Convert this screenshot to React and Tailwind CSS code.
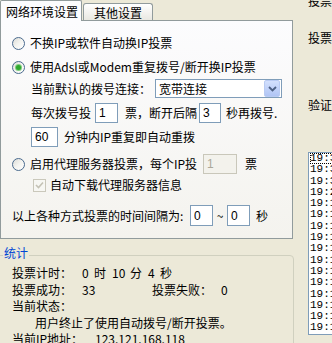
import React from 'react';

const cjk = "font-['Noto_Sans_CJK_SC','Noto_Sans',sans-serif]";

function Radio({ checked }) {
  return (
    <span className="flex h-[13px] w-[13px] shrink-0 items-center justify-center rounded-full border border-[#4a6a8e] bg-gradient-to-br from-[#dcdcd7] via-[#f4f4f0] to-white">
      {checked && <span className="h-[5px] w-[5px] rounded-full bg-[#2fa82f] shadow-[0_0_0_1px_#7fcd7f]" />}
    </span>
  );
}

function Field({ value, className, disabled }) {
  return (
    <input
      readOnly
      value={value}
      disabled={disabled}
      className={
        'shrink-0 px-[3px] text-[12px] outline-none font-["Liberation_Sans",sans-serif] ' +
        (disabled
          ? 'border border-[#c9c7ba] bg-[#f3f2ec] text-[#aca899] '
          : 'border border-[#7f9db9] bg-white text-black ') +
        className
      }
    />
  );
}

const logs = [
  '19:34:52 投票成功',
  '19:33:47 投票成功',
  '19:31:05 投票成功',
  '19:28:40 投票成功',
  '19:19:22 投票成功',
  '19:18:56 投票成功',
  '19:18:31 投票成功',
  '19:17:58 投票成功',
  '19:17:26 投票成功',
  '19:16:59 投票成功',
  '19:16:33 投票成功',
  '19:16:02 投票成功',
  '19:15:37 投票成功',
  '19:15:10 投票成功',
  '19:14:44 投票成功',
  '19:14:18 投票成功',
];

export default function App() {
  return (
    <div className={`flex h-[343px] w-[332px] overflow-hidden bg-[#ece9d8] text-[12px] leading-[14px] text-black ${cjk}`}>
      {/* left side: tabs + stats */}
      <div className="flex w-[294px] shrink-0 flex-col">
        <div className="flex h-[20px] shrink-0 items-end">
          <div className="relative z-10 -mb-px flex h-[21px] w-[82px] items-center rounded-t-[2px] border-x border-t border-[#919b9c] bg-[#fcfcfe] pl-[5px] pt-[2px]">
            网络环境设置
          </div>
          <div className="ml-px flex h-[17px] w-[70px] items-center justify-center rounded-t-[3px] border-x border-t border-[#919b9c] bg-gradient-to-b from-white to-[#e9e8e1] pt-[1px]">
            其他设置
          </div>
        </div>

        <div className="flex h-[219px] w-[293px] shrink-0 flex-col border border-[#919b9c] bg-gradient-to-b from-[#fcfcfe] to-[#f4f3ee] pl-[11px]">
          <div className="mt-[11px] flex h-[22px] items-center gap-[5px]">
            <Radio />
            <span>不换IP或软件自动换IP投票</span>
          </div>
          <div className="mt-[2px] flex h-[22px] items-center gap-[5px]">
            <Radio checked />
            <span>使用Adsl或Modem重复拨号/断开换IP投票</span>
          </div>
          <div className="flex h-[21px] items-center pl-[19px]">
            <span className="w-[124px] shrink-0">当前默认的拨号连接：</span>
            <div className="flex h-[19px] w-[127px] items-center border border-[#7f9db9] bg-white pl-[3px] pr-px">
              <span className="flex-1">宽带连接</span>
              <span className="flex h-[17px] w-[16px] items-center justify-center rounded-[2px] border border-[#b9cbf3] bg-gradient-to-b from-[#d3e0fd] to-[#b0c5f5]">
                <svg width="9" height="6" viewBox="0 0 9 6">
                  <path d="M1 1 L4.5 4.5 L8 1" fill="none" stroke="#4d6185" strokeWidth="1.8" />
                </svg>
              </span>
            </div>
          </div>
          <div className="mt-[4px] flex h-[20px] items-center pl-[19px]">
            <span className="w-[64px] shrink-0">每次拨号投</span>
            <Field value="1" className="h-[20px] w-[23px]" />
            <span className="ml-[7px] w-[74px] shrink-0">票，断开后隔</span>
            <Field value="3" className="h-[20px] w-[22px]" />
            <span className="ml-[5px]">秒再拨号.</span>
          </div>
          <div className="mt-[4px] flex h-[20px] items-center pl-[19px]">
            <Field value="60" className="h-[20px] w-[27px]" />
            <span className="ml-[6px]">分钟内IP重复即自动重拨</span>
          </div>
          <div className="mt-[7px] flex h-[20px] items-center">
            <Radio />
            <span className="ml-[5px] w-[173px] shrink-0">启用代理服务器投票，每个IP投</span>
            <Field value="1" disabled className="h-[20px] w-[34px]" />
            <span className="ml-[8px]">票</span>
          </div>
          <div className="mt-px flex h-[20px] items-center pl-[21px]">
            <span className="flex h-[13px] w-[13px] items-center justify-center border border-[#cac8bb] bg-[#f7f7f3]">
              <svg width="9" height="8" viewBox="0 0 9 8">
                <path d="M1 4 L3.5 6.5 L8 1.5" fill="none" stroke="#c4c2b5" strokeWidth="1.6" />
              </svg>
            </span>
            <span className="ml-[4px]">自动下载代理服务器信息</span>
          </div>
          <div className="mt-[10px] flex h-[21px] items-center">
            <span className="w-[178px] shrink-0 whitespace-nowrap">以上各种方式投票的时间间隔为:</span>
            <Field value="0" className="h-[21px] w-[23px]" />
            <span className="w-[14px] shrink-0 text-center">~</span>
            <Field value="0" className="h-[21px] w-[23px]" />
            <span className="ml-[6px]">秒</span>
          </div>
        </div>

        <fieldset className="-ml-[4px] mt-[7px] h-[120px] w-[298px] shrink-0 rounded-[4px] border border-[#d0d0bf]">
          <legend className="ml-[6px] h-[18px] px-px pb-[4px] leading-[14px] text-[#0046d5]">统计</legend>
          <div className="mt-px flex flex-col pl-[15px]">
            <div className="flex h-[16.5px] items-center">
              <span className="w-[70px] shrink-0">投票计时：</span>
              <span className="w-[12px] shrink-0">0</span>
              <span className="w-[18px] shrink-0">时</span>
              <span className="w-[18px] shrink-0">10</span>
              <span className="w-[18px] shrink-0">分</span>
              <span className="w-[12px] shrink-0">4</span>
              <span>秒</span>
            </div>
            <div className="flex h-[16.5px] items-center">
              <span className="w-[70px] shrink-0">投票成功：</span>
              <span className="w-[70px] shrink-0">33</span>
              <span className="w-[69px] shrink-0">投票失败：</span>
              <span>0</span>
            </div>
            <div className="flex h-[16.5px] items-center">当前状态：</div>
            <div className="flex h-[16.5px] items-center pl-[23px]">用户终止了使用自动拨号/断开投票。</div>
            <div className="flex h-[16.5px] items-center">
              <span className="w-[83px] shrink-0">当前IP地址：</span>
              <span>123.121.168.118</span>
            </div>
          </div>
        </fieldset>
      </div>

      {/* right side: labels + log list */}
      <div className="flex min-w-0 flex-1 flex-col pl-[14px]">
        <div className="flex h-[8px] shrink-0 items-end overflow-hidden">
          <span className="shrink-0">投票</span>
        </div>
        <div className="mt-[23px] h-[14px] shrink-0 whitespace-nowrap">投票</div>
        <div className="mt-[53px] h-[14px] shrink-0 whitespace-nowrap">验证</div>
        <div className="mt-[40px] h-[183px] w-[90px] shrink-0 overflow-hidden border border-[#7f9db9] bg-white pl-px font-['Liberation_Mono',monospace] text-[11px]">
          {logs.map((t, i) => (
            <div
              key={i}
              className={
                'h-[11.3px] whitespace-nowrap leading-[11.3px] ' +
                (i === 0 ? 'outline outline-1 -outline-offset-1 outline-dotted outline-black' : '')
              }
            >
              {t}
            </div>
          ))}
        </div>
      </div>
    </div>
  );
}
